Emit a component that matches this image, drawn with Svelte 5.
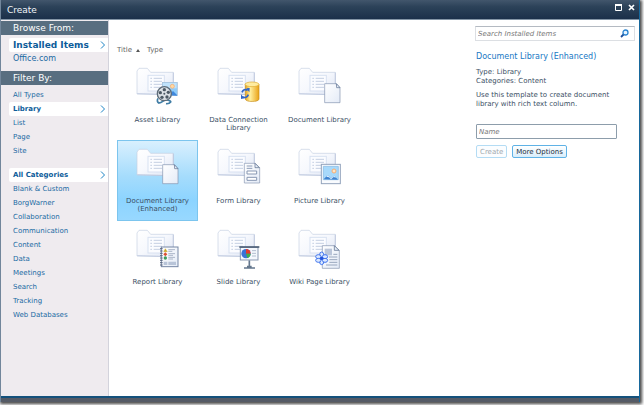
<script lang="ts">
  const types = ['All Types', 'Library', 'List', 'Page', 'Site'];
  const categories = [
    'All Categories',
    'Blank & Custom',
    'BorgWarner',
    'Collaboration',
    'Communication',
    'Content',
    'Data',
    'Meetings',
    'Search',
    'Tracking',
    'Web Databases',
  ];
  const templates = [
    { name: 'Asset Library', icon: 'asset' },
    { name: 'Data Connection Library', icon: 'data' },
    { name: 'Document Library', icon: 'document' },
    { name: 'Document Library (Enhanced)', icon: 'document' },
    { name: 'Form Library', icon: 'form' },
    { name: 'Picture Library', icon: 'picture' },
    { name: 'Report Library', icon: 'report' },
    { name: 'Slide Library', icon: 'slide' },
    { name: 'Wiki Page Library', icon: 'wiki' },
  ];

  let source = $state('Installed Items');
  let type = $state('Library');
  let category = $state('All Categories');
  let selected = $state('Document Library (Enhanced)');
  let name = $state('');
</script>

{#snippet navItem(label: string, active: boolean, pick: () => void)}
  <li>
    <button class="nav-item" class:active onclick={pick}>
      {label}
      {#if active}
        <svg class="chevron" viewBox="0 0 6 8" aria-hidden="true"><path d="M1 .5 4.5 4 1 7.5" /></svg>
      {/if}
    </button>
  </li>
{/snippet}

{#snippet templateIcon(icon: string)}
  <svg class="icon" viewBox="0 0 132 120" aria-hidden="true">
    <path d="M3 12 9 4h25l10 12h68v64L104 83 3 81z" fill="url(#folder)" stroke="#c6d0e3" stroke-width="2" />
    <path d="M4 80 106 83l6-4V17" fill="none" stroke="#b3c0d9" stroke-width="2" />
    <rect x="36" y="25" width="49" height="47" fill="#fbfcff" stroke="#d8e1f1" stroke-width="3" />
    <path d="M43 34h5m5 0h25M43 43h5m5 0h25M43 52h5m5 0h25M43 61h5m5 0h25" stroke="#c5cfe2" stroke-width="3" />

    {#if icon === 'asset'}
      <rect x="79" y="46" width="45" height="40" fill="#8fccfa" stroke="#a7bfd7" stroke-width="2" />
      <path d="M81 48h41v16H81z" fill="#bfe2fb" />
      <circle cx="109" cy="58" r="6" fill="#ffd9a5" stroke="#f5a867" stroke-width="2" />
      <path d="m98 85 13-13 12 12v2z" fill="#3f87dc" />
      <path d="M64 103q5 9 15 1t15-5q12 3 10 6q-4 6-14 5M66 94q-5 9 3 15" fill="none" stroke="#407da5" stroke-width="5" />
      <circle cx="85" cy="80" r="21" fill="#dae0e5" stroke="#5d6b78" stroke-width="4" />
      <g fill="#4c5965">
        <circle cx="85" cy="68" r="5" /><circle cx="97" cy="76" r="5" /><circle cx="93" cy="90" r="5" />
        <circle cx="78" cy="91" r="5" /><circle cx="73" cy="77" r="5" /><circle cx="85" cy="80" r="3" />
      </g>
    {:else if icon === 'data'}
      <path d="M85 52v44c0 10 41 10 41 0V52z" fill="url(#gold)" stroke="#c99120" stroke-width="2" />
      <ellipse cx="105" cy="52" rx="21" ry="7" fill="#ffec9f" stroke="#dea92c" stroke-width="2" />
      <path d="M75 76q5-12 17-6M94 83q-5 13-18 6" fill="none" stroke="#2f65c8" stroke-width="5" />
      <path d="m88 64 10-1-1 13zM82 94l-10 2V82z" fill="#2f65c8" />
    {:else if icon === 'document'}
      <path d="M80 50h35l11 12v45H80z" fill="url(#paper)" stroke="#8292ad" stroke-width="2" />
      <path d="m115 50 1 12h10z" fill="#eef4fc" stroke="#53688b" stroke-width="2" />
    {:else if icon === 'form'}
      <path d="M82 46h33l13 13v46H82z" fill="url(#paper)" stroke="#8796b0" stroke-width="2" />
      <path d="M114 46v13h13z" fill="#e7eef8" stroke="#546888" stroke-width="2" />
      <path d="M89 54h17m-17 7h17" stroke="#8c9cb7" stroke-width="3" />
      <path d="M90 69h29v9H90zM90 88h29v9H90z" fill="#fff" stroke="#8797b2" stroke-width="3" />
    {:else if icon === 'picture'}
      <rect x="70" y="49" width="57" height="58" fill="#f9fbfe" stroke="#93a3bc" stroke-width="3" />
      <path d="M76 55h45v40H76z" fill="#a7d9fb" stroke="#80b4df" stroke-width="2" />
      <circle cx="108" cy="69" r="6" fill="#ffe5c2" stroke="#f7ad73" stroke-width="3" />
      <path d="m77 94 12-13 10 10 10-8 11 12z" fill="#3f83d0" />
      <path d="m85 86 4-5 5 5 5 5 10-8 5 6-7-2-8 7-6-6z" fill="#e1f2ff" />
    {:else if icon === 'report'}
      <rect x="76" y="54" width="50" height="59" fill="url(#paper)" stroke="#7687a5" stroke-width="3" />
      <path d="M72 59h8m-8 7h8m-8 7h8m-8 7h8m-8 7h8m-8 7h8m-8 7h8m-8 7h8" stroke="#5a6780" stroke-width="3" />
      <path d="m88 59 6 9H83z" fill="#c9a421" stroke="#c9a421" />
      <path d="m88 70 6 6-6 6-6-6z" fill="#db4f32" />
      <circle cx="88" cy="87" r="5" fill="#3e9c5c" />
      <path d="M97 62h20m-20 5h12M97 74h20m-20 5h14M97 85h20m-20 5h14" stroke="#aab5c8" stroke-width="3" />
      <path d="M83 98h11v10H83zM97 98h23v10H97z" fill="#b8c4d8" />
    {:else if icon === 'slide'}
      <path d="M97 94v20m-16 3h33M90 113h14" stroke="#64778d" stroke-width="5" />
      <rect x="70" y="55" width="53" height="38" fill="#f5f8fd" stroke="#8999b2" stroke-width="3" />
      <path d="M67 54h60" stroke="#4e6077" stroke-width="5" />
      <circle cx="87" cy="74" r="14" fill="#3a73d8" />
      <path d="M87 74V60a14 14 0 0 1 14 14z" fill="#e43b2e" />
      <path d="M87 74h14a14 14 0 0 1-10 13z" fill="#40af49" />
      <path d="M105 65h12m-12 8h12m-12 8h12" stroke="#b1bdcf" stroke-width="3" />
    {:else if icon === 'wiki'}
      <path d="M73 50h36l15 14v54H73z" fill="url(#paper)" stroke="#8493ad" stroke-width="2" />
      <path d="M109 50v14h14z" fill="#e7eef8" stroke="#4e6385" stroke-width="2" />
      <path d="M80 59h22v20H80z" fill="#bbc6da" />
      <path d="M106 76h12m-25 8h25m-24 8h24m-24 8h24m-34 8h34" stroke="#98a6bd" stroke-width="3" />
      <g fill="#dce9ff" stroke="#4276ee" stroke-width="3">
        <ellipse cx="71" cy="77" rx="6" ry="8" /><ellipse cx="71" cy="99" rx="6" ry="8" />
        <ellipse cx="61" cy="83" rx="8" ry="6" /><ellipse cx="81" cy="83" rx="8" ry="6" />
        <ellipse cx="61" cy="94" rx="8" ry="6" /><ellipse cx="81" cy="94" rx="8" ry="6" />
      </g>
      <circle cx="71" cy="88" r="5" fill="#2453db" />
    {/if}
  </svg>
{/snippet}

<svg class="defs" aria-hidden="true">
  <defs>
    <linearGradient id="folder" x2="1" y2="1">
      <stop stop-color="#fff" /><stop offset=".5" stop-color="#f6f8fd" /><stop offset="1" stop-color="#dde4f3" />
    </linearGradient>
    <linearGradient id="paper" x2="1" y2="1">
      <stop stop-color="#fff" /><stop offset="1" stop-color="#e4ebf7" />
    </linearGradient>
    <linearGradient id="gold">
      <stop stop-color="#e7a21b" /><stop offset=".35" stop-color="#fff0a0" /><stop offset="1" stop-color="#eaa216" />
    </linearGradient>
  </defs>
</svg>

<div class="dialog">
  <header class="titlebar">
    <h1>Create</h1>
    <div class="window-buttons">
      <button aria-label="Maximize">
        <svg viewBox="0 0 7 7"><path d="M.5 1v5.500h6V1" fill="none" stroke="#fff" /><path d="M0 0h7v2H0z" fill="#fff" /></svg>
      </button>
      <button aria-label="Close">
        <svg viewBox="0 0 7 7"><path d="m1 1 5 5m0-5L1 6" stroke="#fff" stroke-width="1.700" /></svg>
      </button>
    </div>
  </header>

  <div class="body">
    <nav class="sidebar">
      <h2>Browse From:</h2>
      <ul class="sources">
        {#each ['Installed Items', 'Office.com'] as item}
          {@render navItem(item, source === item, () => (source = item))}
        {/each}
      </ul>
      <h2>Filter By:</h2>
      <ul class="filters">
        {#each types as item}
          {@render navItem(item, type === item, () => (type = item))}
        {/each}
      </ul>
      <ul class="filters categories">
        {#each categories as item}
          {@render navItem(item, category === item, () => (category = item))}
        {/each}
      </ul>
    </nav>

    <main>
      <div class="sort">
        <button>Title <span class="arrow"></span></button>
        <button>Type</button>
      </div>
      <div class="grid">
        {#each templates as template (template.name)}
          <button
            class="template"
            class:selected={selected === template.name}
            onclick={() => (selected = template.name)}
          >
            {@render templateIcon(template.icon)}
            <span>{template.name}</span>
          </button>
        {/each}
      </div>
    </main>

    <aside>
      <div class="search">
        <input type="text" placeholder="Search Installed Items" aria-label="Search Installed Items" />
        <button aria-label="Search">
          <svg viewBox="0 0 9 9">
            <circle cx="5.500" cy="3.500" r="2.500" fill="#e8f5ff" stroke="#2b84d0" stroke-width="1.300" />
            <path d="M3.500 5.500 1 8" stroke="#1c4f9c" stroke-width="1.800" />
          </svg>
        </button>
      </div>
      <div class="details">
        <h3>{selected}</h3>
        <p>Type: Library<br />Categories: Content</p>
        <p>Use this template to create document library with rich text column.</p>
        <input class="name" type="text" placeholder="Name" aria-label="Name" bind:value={name} />
        <div class="actions">
          <button disabled={!name}>Create</button>
          <button>More Options</button>
        </div>
      </div>
    </aside>
  </div>
  <footer></footer>
</div>

<style>
  :global(body) {
    background: #fff;
  }
  .defs {
    position: absolute;
    width: 0;
    height: 0;
  }
  .dialog {
    display: flex;
    flex-direction: column;
    box-sizing: border-box;
    min-height: calc(100vh - 3px);
    margin: 0 4px 3px 0;
    border-left: 1px solid #72869b;
    border-right: 1px solid #17689c;
    box-shadow: 1px 1px 3px 1px #444;
    background: #fff;
    color: #3b4f65;
    font: 7px/8px Verdana, "DejaVu Sans", sans-serif;
  }
  h1, h2, h3, p, ul {
    margin: 0;
    padding: 0;
    font-weight: normal;
  }
  ul {
    list-style: none;
  }
  button {
    padding: 0;
    border: 0;
    background: none;
    color: inherit;
    font: inherit;
    cursor: pointer;
  }
  .titlebar {
    display: flex;
    align-items: center;
    justify-content: space-between;
    height: 20px;
    padding: 0 4px 0 6px;
    border-bottom: 1px solid #8495a6;
    box-sizing: border-box;
    background: linear-gradient(#42566c, #2c4259 35%, #1b304a);
    color: #f0f4f8;
  }
  h1 {
    font-size: 9px;
    line-height: 12px;
  }
  .window-buttons {
    display: flex;
    gap: 6px;
    padding-bottom: 4px;
  }
  .window-buttons svg {
    display: block;
    width: 7px;
    height: 7px;
  }
  .body {
    display: flex;
    flex: 1;
  }
  .sidebar {
    flex: none;
    width: 107px;
    padding-top: 1px;
    border-right: 1px solid #d3d3dc;
    background: #efebef;
  }
  h2 {
    height: 14px;
    padding-left: 12px;
    background: #586e80;
    color: #fff;
    font-size: 9px;
    line-height: 14px;
  }
  .sources {
    padding: 3px 0 5px 8px;
  }
  .filters {
    padding: 3px 0 0 8px;
  }
  .categories {
    padding-top: 10px;
  }
  .nav-item {
    display: flex;
    align-items: center;
    justify-content: space-between;
    box-sizing: border-box;
    width: 100%;
    height: 14px;
    padding: 0 2px 0 4px;
    border-radius: 2px 0 0 2px;
    color: #1a6aa3;
    text-align: left;
    white-space: nowrap;
  }
  .sources .nav-item {
    font-size: 8px;
  }
  .nav-item.active {
    background: #fff;
    color: #0d5c9a;
    font-weight: bold;
  }
  .sources .nav-item.active {
    font-size: 9px;
  }
  .chevron {
    width: 6px;
    height: 8px;
    fill: none;
    stroke: #1c83c5;
    stroke-width: 1;
  }
  main {
    flex: 1;
    padding: 24px 8px 8px;
  }
  .sort {
    display: flex;
    gap: 7px;
    height: 15px;
    color: #666;
  }
  .sort button {
    display: flex;
    align-items: center;
    gap: 4px;
    height: 12px;
  }
  .arrow {
    border: 2px solid transparent;
    border-top: 0;
    border-bottom: 3px solid #555;
  }
  .grid {
    display: grid;
    grid-template-columns: repeat(3, 81px);
  }
  .template {
    display: flex;
    flex-direction: column;
    align-items: center;
    gap: 9px;
    box-sizing: border-box;
    min-height: 81px;
    padding: 7px 4px;
    border: 1px solid transparent;
  }
  .template.selected {
    border-color: #7cc5ee;
    background: linear-gradient(#d9f0fe, #a5dcfc 45%, #8cd4ff 75%, #98d8ff);
  }
  .icon {
    width: 44px;
    height: 40px;
  }
  aside {
    flex: none;
    width: 160px;
    padding: 6px 4px 0 0;
  }
  .search {
    display: flex;
    align-items: center;
    box-sizing: border-box;
    height: 15px;
    padding: 0 5px 0 2px;
    border: 1px solid #dcdfe3;
    border-top-color: #b4bac2;
  }
  .search svg {
    display: block;
    width: 9px;
    height: 9px;
  }
  input {
    min-width: 0;
    font: inherit;
    color: inherit;
  }
  .search input {
    flex: 1;
    padding: 0;
    border: 0;
    outline: 0;
    background: none;
  }
  input::placeholder {
    color: #777;
    font-style: italic;
    opacity: 1;
  }
  .details {
    padding: 11px 18px 0 1px;
  }
  h3 {
    margin-bottom: 6px;
    color: #1878c4;
    font-size: 8px;
    line-height: 10px;
    white-space: nowrap;
  }
  p {
    margin-bottom: 5px;
    line-height: 9px;
  }
  .name {
    display: block;
    box-sizing: border-box;
    width: 100%;
    height: 15px;
    margin-top: 15px;
    padding: 0 2px;
    border: 1px solid #8d9dab;
    border-radius: 1px;
  }
  .actions {
    display: flex;
    gap: 5px;
    margin-top: 6px;
  }
  .actions button {
    height: 13px;
    padding: 0 3px;
    border: 1px solid #5fb2e6;
    border-radius: 2px;
    background: linear-gradient(#fff, #d9eefb);
    color: #222f3d;
  }
  .actions button:disabled {
    border-color: #b4dcf4;
    background: #fbfdff;
    color: #a3a8ae;
  }
  footer {
    height: 4px;
    border-top: 2px solid #14517c;
    background: #555b66;
  }
</style>
